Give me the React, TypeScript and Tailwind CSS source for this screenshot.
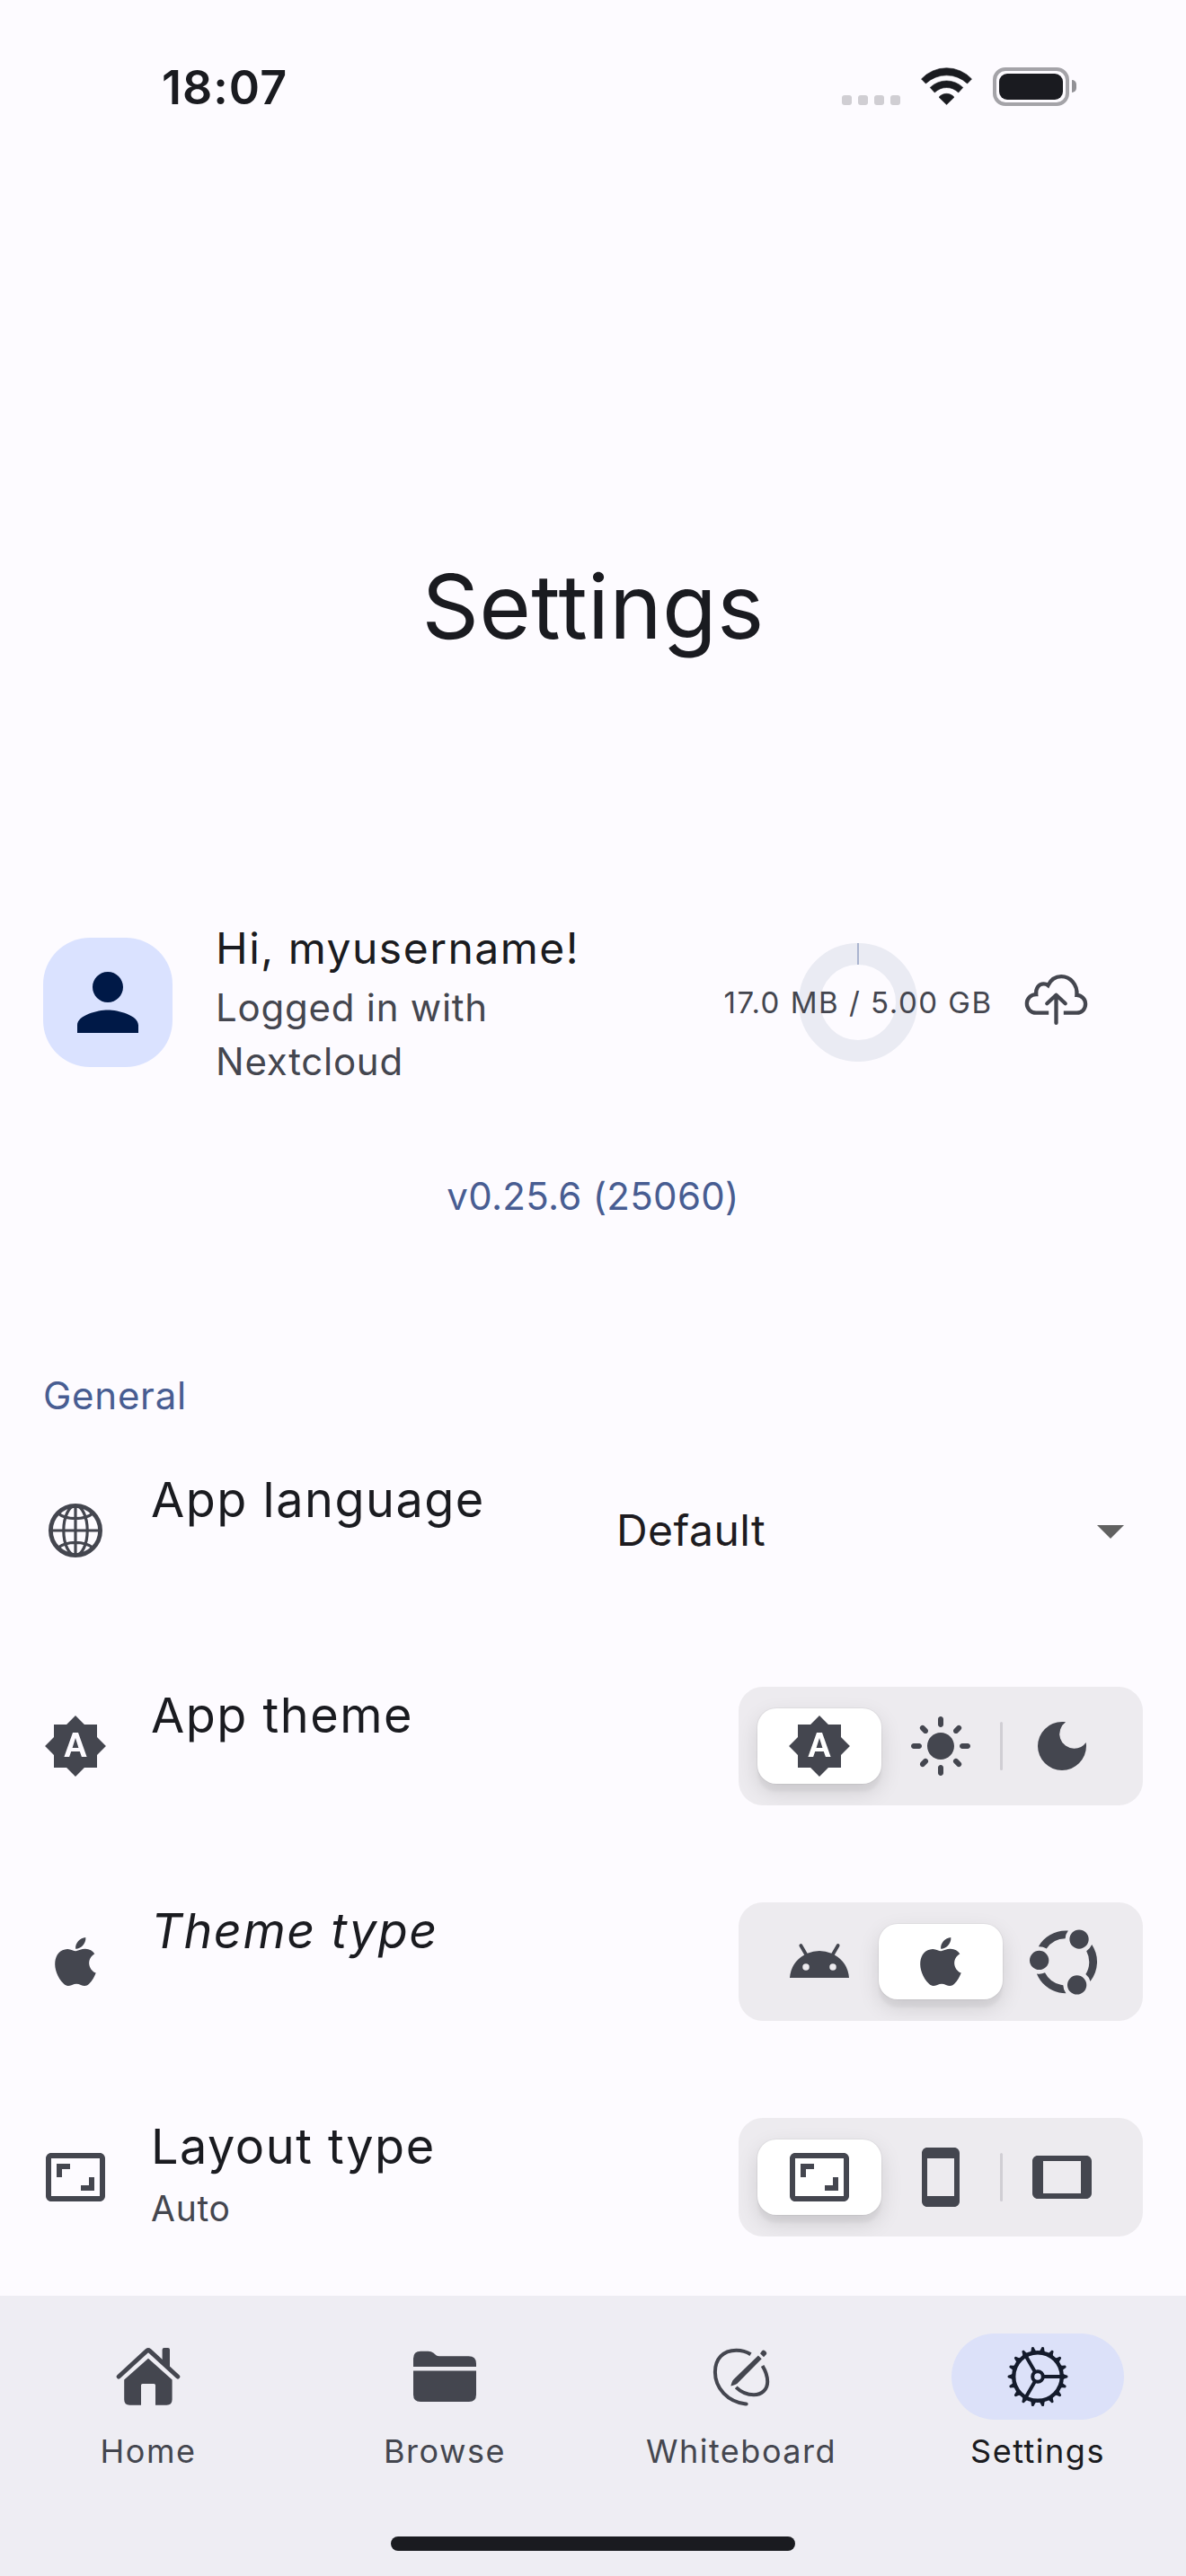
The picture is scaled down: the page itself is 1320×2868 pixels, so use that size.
import type { ReactNode } from 'react';
import {
  MdAndroid,
  MdArrowDropDown,
  MdAspectRatio,
  MdBrightnessAuto,
  MdDarkMode,
  MdLightMode,
  MdPerson,
  MdSmartphone,
  MdTablet,
} from 'react-icons/md';
import { SiUbuntu } from 'react-icons/si';

function WifiIcon() {
  return (
    <svg width="57" height="42" viewBox="0 0 57 42" fill="#1a1b20">
      <path d="M0.5 12.9A38.3 38.3 0 0 1 56.5 12.9L51.6 18A33.6 33.6 0 0 0 5.4 18Z" stroke="#1a1b20" strokeWidth="0.6" strokeLinejoin="round" />
      <path d="M10.2 22.4A26.3 26.3 0 0 1 46.8 22.4L41.7 28A18.6 18.6 0 0 0 15.3 28Z" stroke="#1a1b20" strokeWidth="0.6" strokeLinejoin="round" />
      <path d="M20 33.2A11.2 11.2 0 0 1 37 33.2L28.5 41.6Z" stroke="#1a1b20" strokeWidth="0.6" strokeLinejoin="round" />
    </svg>
  );
}

function AppleIcon() {
  return (
    <svg width="72" height="72" viewBox="0 0 24 24" fill="#44464f">
      <path d="M17.05 20.28c-.98.95-2.05.8-3.08.35-1.09-.46-2.09-.48-3.24 0-1.44.62-2.2.44-3.06-.35C2.79 15.25 3.51 7.59 9.05 7.31c1.35.07 2.29.74 3.08.8 1.18-.24 2.31-.93 3.57-.84 1.51.12 2.65.72 3.4 1.8-3.12 1.87-2.38 5.98.48 7.13-.57 1.5-1.31 2.99-2.54 4.09l.01-.01zM12.03 7.25c-.15-2.23 1.66-4.07 3.74-4.25.29 2.58-2.34 4.5-3.74 4.25z" />
    </svg>
  );
}

function CloudUploadIcon() {
  return (
    <svg width="72" height="72" viewBox="0.5 0 72 72" fill="none" stroke="#44464f" strokeWidth="4.3">
      <path d="M27.7 47.7H13.6A10.3 10.3 0 0 1 13.7 27.1C13 20 17 15.3 22 15.3C24 15.3 25.6 15.8 27 17C30 11 35.5 7.2 41.7 7.2C51.5 7.2 60 16 58.9 27.9C64.5 28.2 68.6 32.5 68.6 37.8C68.6 43.5 64.4 47.7 59 47.7H44.3" />
      <path d="M36 58.9V28M25.8 37.3L36 27.7L46.2 37.3" strokeLinecap="round" strokeLinejoin="round" />
    </svg>
  );
}

function GlobeIcon() {
  return (
    <svg width="72" height="72" viewBox="-36 -36 72 72" fill="none" stroke="#44464f" strokeWidth="3.2">
      <circle r="27.6" strokeWidth="4.8" />
      <ellipse rx="13.2" ry="27.6" />
      <path d="M0 -28V28M-28 0H28M-20 -19.5C-10 -11.3 10 -11.3 20 -19.5M-20 19.5C-10 11.3 10 11.3 20 19.5" />
    </svg>
  );
}

function HomeIcon() {
  return (
    <svg width="72" height="72" viewBox="0 0 72 72" fill="#44464f">
      <path d="M3.2 36L34.6 7.2Q36 6 37.4 7.2L68.8 36" fill="none" stroke="#44464f" strokeWidth="5" strokeLinecap="round" strokeLinejoin="round" />
      <path d="M51.6 20V6Q51.6 4 53.6 4H58Q60 4 60 6V28Z" />
      <path d="M36 15.7L62.6 39.5V61.5Q62.6 67.7 56.4 67.7H44V45.6Q44 44 42.4 44H29.6Q28 44 28 45.6V67.7H15.4Q9.2 67.7 9.2 61.5V39.5Z" />
    </svg>
  );
}

function FolderIcon() {
  return (
    <svg width="72" height="72" viewBox="0 0 72 72" fill="#44464f">
      <path d="M1 25V16Q1 7.7 9.3 7.7H17.5Q21 7.7 23.6 9.8L26.4 12.2Q27.8 13.3 30 13.3H62.5Q71 13.3 71 21.5V25Z" />
      <path d="M1 29.4H71V56Q71 64 63 64H9Q1 64 1 56Z" />
    </svg>
  );
}

function WhiteboardIcon() {
  return (
    <svg width="72" height="72" viewBox="0 0 72 72" fill="#44464f">
      <g fill="none" stroke="#44464f" strokeWidth="4">
        <path d="M46.5 11.2C41 7.7 36 6.8 30.5 6.8C15.5 6.8 6.9 16.5 6.9 31C6.9 49 21 64 41 66.5" />
        <path d="M59.6 24C63.3 30 65.2 35.7 65.2 41.7C65.2 50.5 58.8 56.3 50 56.3C42.5 56.3 35.8 53.4 30.2 47.9" />
      </g>
      <circle cx="41.6" cy="66.6" r="2" />
      <path d="M54.9 12.6L58.7 16.2L32 43.2C30 45 27 45.9 24.4 46.4C24.9 43.8 25.8 40.9 27.6 39Z" />
      <path d="M57 10.3L59 7.4Q60.6 5.8 62.3 7.2L63.6 8.4Q65.1 9.8 63.6 11.6L61 14.2Z" />
    </svg>
  );
}

const gearTeeth = Array.from({ length: 18 }, (_, i) => i * 20);

function GearIcon() {
  return (
    <svg width="72" height="72" viewBox="-36 -36 72 72" fill="none" stroke="#141b2c">
      <circle r="26.8" strokeWidth="4.4" />
      <circle r="5.8" strokeWidth="4" />
      <path d="M7 0H26M-3.5 6.1L-13 22.5M-3.5 -6.1L-13 -22.5" strokeWidth="4" />
      {gearTeeth.map((angle) => (
        <path
          key={angle}
          d="M28 -3.2L30 -2.2L33 -1.3Q34.2 0 33 1.3L30 2.2L28 3.2Z"
          fill="#141b2c"
          stroke="none"
          transform={`rotate(${angle})`}
        />
      ))}
    </svg>
  );
}

function StatusBar() {
  return (
    <header className="flex h-[196px] shrink-0 items-center justify-between pl-[180px] pr-[122px]">
      <span className="text-[52px] font-semibold leading-[64px] tracking-[1px] text-[#1a1b20]">18:07</span>
      <div className="mb-1 flex items-end">
        <div className="mr-[23px] flex gap-[7px]">
          {[0, 1, 2, 3].map((i) => (
            <span key={i} className="size-[11px] rounded-[3px] bg-[#d0ced3]" />
          ))}
        </div>
        <WifiIcon />
        <div className="-mb-px ml-[23px] flex h-[43px] w-[85px] rounded-[14px] border-4 border-[#a4a3a8] p-[3px]">
          <div className="w-full rounded-[9px] bg-[#1a1b20]" />
        </div>
        <div className="mb-[14px] ml-[3px] h-[14px] w-[5px] rounded-r-full bg-[#929196]" />
      </div>
    </header>
  );
}

function Profile() {
  return (
    <section className="mt-[285px] flex h-[192px] shrink-0 items-center pl-12 pr-[108px]">
      <div className="flex size-36 items-center justify-center rounded-[52px] bg-[#dae2ff]">
        <MdPerson size={102} color="#001947" />
      </div>
      <div className="ml-12">
        <p className="text-[48px] leading-[72px] tracking-[1.5px] text-[#1a1b20]">Hi, myusername!</p>
        <p className="text-[42px] leading-[60px] tracking-[0.75px] text-[#44464f]">
          Logged in with
          <br />
          Nextcloud
        </p>
      </div>
      <div className="relative ml-auto flex size-[132px] items-center justify-center">
        <svg className="absolute inset-0" width="132" height="132" viewBox="0 0 132 132" fill="none">
          <circle cx="66" cy="66" r="54" stroke="#eaebf3" strokeWidth="24" />
          <path d="M66 0V24" stroke="#a4afcb" strokeWidth="1.8" />
        </svg>
        <span className="relative whitespace-nowrap text-[33px] leading-[48px] tracking-[1.5px] text-[#44464f]">
          17.0 MB / 5.00 GB
        </span>
      </div>
      <div className="ml-[119px]">
        <CloudUploadIcon />
      </div>
    </section>
  );
}

function SettingRow({
  icon,
  title,
  subtitle,
  italic,
  children,
}: {
  icon: ReactNode;
  title: string;
  subtitle?: string;
  italic?: boolean;
  children: ReactNode;
}) {
  return (
    <div className="flex h-60 items-center px-12 text-[#44464f]">
      {icon}
      <div className="ml-12 h-[138px]">
        <p className={`text-[54px] leading-[69px] tracking-[1.5px] text-[#1a1b20] ${italic ? 'italic' : ''}`}>{title}</p>
        {subtitle && <p className="text-[39px] leading-[69px] tracking-[0.75px]">{subtitle}</p>}
      </div>
      <div className="ml-auto">{children}</div>
    </div>
  );
}

function Segmented({ icons, selected }: { icons: ReactNode[]; selected: number }) {
  return (
    <div className="flex h-[132px] w-[450px] items-center justify-center overflow-hidden rounded-[27px] bg-[#edebef]">
      {icons.map((icon, i) => (
        <div key={i} className="relative flex h-[84px] w-[135px] items-center justify-center">
          {i === selected && (
            <div className="absolute inset-y-0 -inset-x-[1.5px] rounded-[21px] bg-white shadow-[0_0_0_1px_rgba(0,0,0,0.04),0_9px_24px_rgba(0,0,0,0.12),0_9px_3px_rgba(0,0,0,0.04)]" />
          )}
          {i > 0 && selected !== i && selected !== i - 1 && (
            <div className="absolute -left-[1.5px] top-[15px] h-[54px] w-[3px] rounded-full bg-[#d0ced4]" />
          )}
          <div className="relative">{icon}</div>
        </div>
      ))}
    </div>
  );
}

function NavItem({ icon, label, active }: { icon: ReactNode; label: string; active?: boolean }) {
  return (
    <div className="flex flex-1 flex-col items-center pt-[42px]">
      <div className={`flex h-24 w-48 items-center justify-center rounded-full ${active ? 'bg-[#dce1f9]' : ''}`}>{icon}</div>
      <span className={`mt-[11px] text-[36px] leading-[48px] tracking-[1.5px] ${active ? 'text-[#1a1b20]' : 'text-[#44464f]'}`}>
        {label}
      </span>
    </div>
  );
}

export default function App() {
  return (
    <div className="flex h-[2868px] w-[1320px] flex-col overflow-hidden bg-[#fdfbff] font-['Inter',sans-serif] [font-optical-sizing:none]">
      <StatusBar />
      <h1 className="mt-[419px] text-center text-[99px] leading-[120px] tracking-[0.25px] text-[#1a1b20]">Settings</h1>
      <Profile />
      <p className="mt-[90px] text-center text-[42px] leading-[60px] tracking-[0.3px] text-[#485d92]">v0.25.6 (25060)</p>
      <h2 className="mt-[162px] px-12 text-[42px] leading-[60px] tracking-[0.75px] text-[#485d92]">General</h2>
      <section>
        <SettingRow icon={<GlobeIcon />} title="App language">
          <div className="flex w-[586px] items-center justify-between">
            <span className="text-[48px] leading-[72px] tracking-[0.45px] text-[#1d1b20]">Default</span>
            <MdArrowDropDown size={72} color="#616161" />
          </div>
        </SettingRow>
        <SettingRow icon={<MdBrightnessAuto size={72} />} title="App theme">
          <Segmented
            selected={0}
            icons={[<MdBrightnessAuto size={72} />, <MdLightMode size={72} />, <MdDarkMode size={72} />]}
          />
        </SettingRow>
        <SettingRow icon={<AppleIcon />} title="Theme type" italic>
          <Segmented
            selected={1}
            icons={[<MdAndroid size={72} />, <AppleIcon />, <SiUbuntu size={75} className="ml-[3px]" />]}
          />
        </SettingRow>
        <SettingRow icon={<MdAspectRatio size={72} />} title="Layout type" subtitle="Auto">
          <Segmented
            selected={0}
            icons={[<MdAspectRatio size={72} />, <MdSmartphone size={72} />, <MdTablet size={72} />]}
          />
        </SettingRow>
      </section>
      <footer className="mt-3 flex flex-1 flex-col items-center bg-[#eeedf3]">
        <nav className="flex w-full">
          <NavItem icon={<HomeIcon />} label="Home" />
          <NavItem icon={<FolderIcon />} label="Browse" />
          <NavItem icon={<WhiteboardIcon />} label="Whiteboard" />
          <NavItem icon={<GearIcon />} label="Settings" active />
        </nav>
        <div className="mb-[28px] mt-auto h-[16px] w-[450px] rounded-full bg-[#1a1b20]" />
      </footer>
    </div>
  );
}
